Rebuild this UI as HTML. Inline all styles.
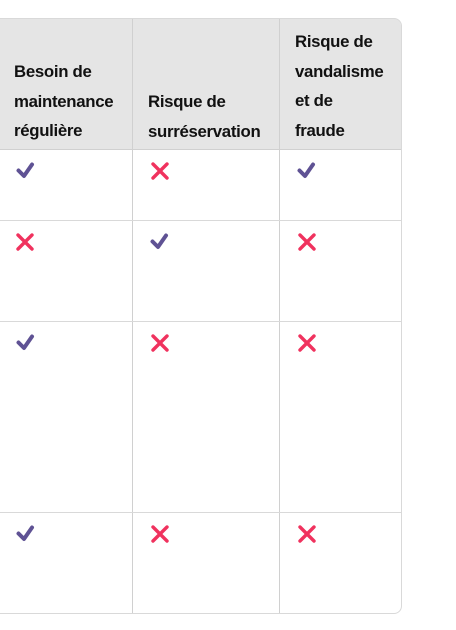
<!DOCTYPE html>
<html><head><meta charset="utf-8"><style>
body{margin:0;width:456px;height:630px;background:#fff;position:relative;overflow:hidden;font-family:"Liberation Sans",sans-serif}
.t{position:absolute;left:-10px;top:18px;width:410px;height:594px;border:1px solid #d9d9d9;border-radius:0 8px 8px 0}
.hd{position:absolute;left:-10px;top:18px;width:411px;height:131px;background:#e5e5e5;border-radius:0 8px 0 0;border-bottom:1px solid #d0d0d0}
.v{position:absolute;width:1px;background:#d9d9d9;top:19px;height:594px}
.h{position:absolute;height:1px;background:#d9d9d9;left:0;width:401px}
.tx{position:absolute;font-weight:bold;font-size:16.8px;line-height:29.5px;color:#111;letter-spacing:-0.3px}
svg{position:absolute}
</style></head><body>
<div class="hd"></div>
<div class="t"></div>
<div class="v" style="left:132px;background:#d0d0d0"></div>
<div class="v" style="left:279px;background:#d0d0d0"></div>
<div class="h" style="top:220px"></div>
<div class="h" style="top:321px"></div>
<div class="h" style="top:512px"></div>
<div class="tx" style="left:14px;top:57px">Besoin de<br>maintenance<br>régulière</div>
<div class="tx" style="left:148px;top:87px">Risque de<br>surréservation</div>
<div class="tx" style="left:295px;top:27px">Risque de<br>vandalisme<br>et de<br>fraude</div>
<svg width="0" height="0"><defs>
<g id="c"><path d="M2.5 8.5 L8 14 L16 2.5" fill="none" stroke="#5f5294" stroke-width="4" stroke-linecap="round" stroke-linejoin="round"/></g>
<g id="x"><path d="M2 2 L16 16 M16 2 L2 16" fill="none" stroke="#f0325e" stroke-width="3.4" stroke-linecap="round"/></g>
</defs></svg>
<svg width="20" height="20" style="left:16px;top:162px"><use href="#c"/></svg>
<svg width="20" height="20" style="left:151px;top:162px"><use href="#x"/></svg>
<svg width="20" height="20" style="left:297px;top:162px"><use href="#c"/></svg>
<svg width="20" height="20" style="left:16px;top:233px"><use href="#x"/></svg>
<svg width="20" height="20" style="left:150px;top:233px"><use href="#c"/></svg>
<svg width="20" height="20" style="left:298px;top:233px"><use href="#x"/></svg>
<svg width="20" height="20" style="left:16px;top:334px"><use href="#c"/></svg>
<svg width="20" height="20" style="left:151px;top:334px"><use href="#x"/></svg>
<svg width="20" height="20" style="left:298px;top:334px"><use href="#x"/></svg>
<svg width="20" height="20" style="left:16px;top:525px"><use href="#c"/></svg>
<svg width="20" height="20" style="left:151px;top:525px"><use href="#x"/></svg>
<svg width="20" height="20" style="left:298px;top:525px"><use href="#x"/></svg>
</body></html>
